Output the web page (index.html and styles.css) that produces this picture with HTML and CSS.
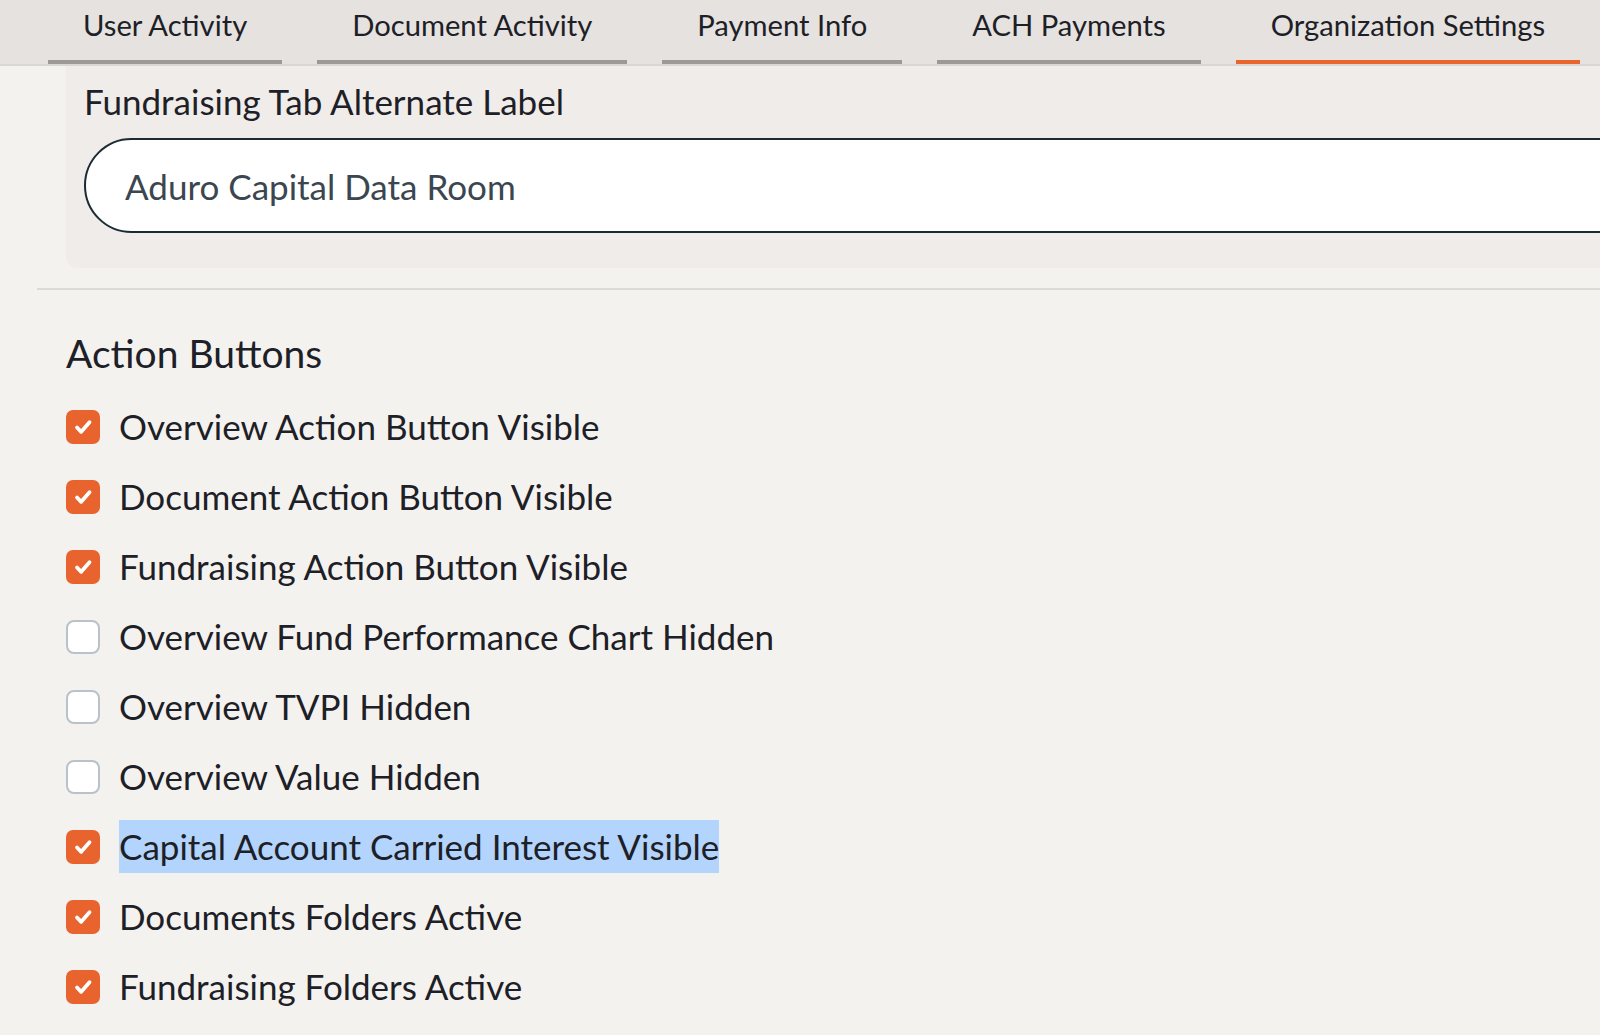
FILE: index.html
```html
<!DOCTYPE html>
<html lang="en">
<head>
<meta charset="utf-8">
<title>Organization Settings</title>
<link rel="stylesheet" href="styles.css">
</head>
<body>
<nav class="tabs">
  <a class="tab">User Activity</a>
  <a class="tab">Document Activity</a>
  <a class="tab">Payment Info</a>
  <a class="tab">ACH Payments</a>
  <a class="tab active">Organization Settings</a>
</nav>
<main class="content">
  <section class="card">
    <label class="field-label">Fundraising Tab Alternate Label</label>
    <div class="pill-input">Aduro Capital Data Room</div>
  </section>
  <hr class="divider">
  <section class="group">
    <h2 class="group-title">Action Buttons</h2>
    <ul class="checks">
      <li class="check-row"><span class="box on"><svg viewBox="0 0 34 34"><polyline points="11,17.5 15.2,21.8 23.5,12.3"/></svg></span><span class="check-label">Overview Action Button Visible</span></li>
      <li class="check-row"><span class="box on"><svg viewBox="0 0 34 34"><polyline points="11,17.5 15.2,21.8 23.5,12.3"/></svg></span><span class="check-label">Document Action Button Visible</span></li>
      <li class="check-row"><span class="box on"><svg viewBox="0 0 34 34"><polyline points="11,17.5 15.2,21.8 23.5,12.3"/></svg></span><span class="check-label">Fundraising Action Button Visible</span></li>
      <li class="check-row"><span class="box"></span><span class="check-label">Overview Fund Performance Chart Hidden</span></li>
      <li class="check-row"><span class="box"></span><span class="check-label">Overview TVPI Hidden</span></li>
      <li class="check-row"><span class="box"></span><span class="check-label">Overview Value Hidden</span></li>
      <li class="check-row"><span class="box on"><svg viewBox="0 0 34 34"><polyline points="11,17.5 15.2,21.8 23.5,12.3"/></svg></span><span class="check-label selected">Capital Account Carried Interest Visible</span></li>
      <li class="check-row"><span class="box on"><svg viewBox="0 0 34 34"><polyline points="11,17.5 15.2,21.8 23.5,12.3"/></svg></span><span class="check-label">Documents Folders Active</span></li>
      <li class="check-row"><span class="box on"><svg viewBox="0 0 34 34"><polyline points="11,17.5 15.2,21.8 23.5,12.3"/></svg></span><span class="check-label">Fundraising Folders Active</span></li>
    </ul>
  </section>
</main>
</body>
</html>
```

FILE: styles.css
```css
* { box-sizing: border-box; }
html, body {
  margin: 0;
  padding: 0;
  background: #f4f2ef;
  font-family: Lato, "Open Sans", "Liberation Sans", sans-serif;
  color: #1d2026;
  overflow: hidden;
}
.tabs {
  display: flex;
  gap: 35px;
  height: 66px;
  padding-left: 48px;
  background: #e5e2df;
  border-bottom: 2px solid #d9d6d3;
}
.tab {
  display: block;
  height: 64px;
  padding: 7px 35px 0;
  font-size: 29.2px;
  line-height: 1.2;
  color: #1d2026;
  border-bottom: 4px solid #9c9a98;
  white-space: nowrap;
}
.tab.active { border-bottom-color: #e9652d; }

.content {
  padding-left: 37px;
}
.card {
  margin-left: 29px;
  padding: 16px 0 35px 18px;
  background: #f0ece9;
  border-bottom-left-radius: 10px;
}
.field-label {
  display: block;
  font-size: 35px;
  line-height: 39px;
}
.pill-input {
  margin-top: 17px;
  width: 1600px;
  height: 95px;
  padding-left: 39px;
  border: 2px solid #1a2b33;
  border-radius: 48px;
  background: #ffffff;
  font-size: 35px;
  line-height: 93px;
  color: #3b4650;
}
.divider {
  margin: 20px 0 0;
  border: 0;
  height: 2px;
  background: #dcd9d6;
}
.group {
  padding: 40px 0 0 29px;
}
.group-title {
  margin: 0;
  font-size: 39px;
  font-weight: 400;
  line-height: 46px;
}
.checks {
  list-style: none;
  margin: 24px 0 0;
  padding: 0;
  display: flex;
  flex-direction: column;
  gap: 17px;
}
.check-row {
  display: flex;
  align-items: center;
  gap: 19px;
  height: 53px;
}
.box {
  flex: none;
  width: 34px;
  height: 34px;
  border-radius: 8px;
  border: 2px solid #b9c1c9;
  background: #ffffff;
}
.box.on {
  border: 0;
  border-radius: 7px;
  background: #e8632d;
}
.box svg {
  display: block;
  width: 34px;
  height: 34px;
}
.box svg polyline {
  fill: none;
  stroke: #ffffff;
  stroke-width: 3.8;
  stroke-linecap: round;
  stroke-linejoin: round;
}
.check-label {
  font-size: 35px;
  line-height: 53px;
  white-space: nowrap;
}
.check-label.selected {
  background: #b3d4fc;
}
```
